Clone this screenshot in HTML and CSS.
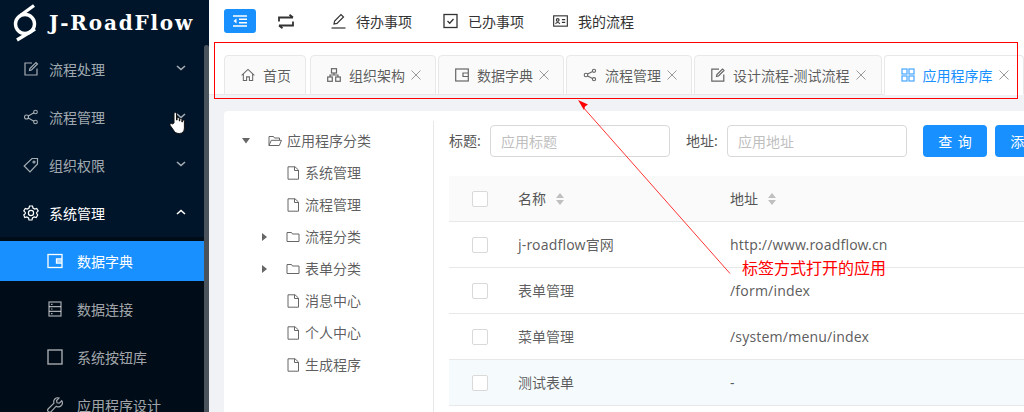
FILE: index.html
```html
<!DOCTYPE html>
<html lang="zh">
<head>
<meta charset="utf-8">
<title>J-RoadFlow</title>
<link rel="stylesheet" href="styles.css">
</head>
<body>
<div class="app">
  <aside class="sidebar">
    <div class="logo">
      <svg class="logo-mark" width="26" height="38" viewBox="0 0 26 38" fill="none" stroke="#fff" stroke-width="3.4"><circle cx="12" cy="20" r="9.5"/><path d="M21 1.500L8 11"/><path d="M4 36L22 25"/></svg>
      <span class="logo-text">J-RoadFlow</span>
    </div>
    <nav class="menu">
      <div class="menu-row">
        <svg class="mi" viewBox="0 0 16 16" fill="none" stroke="currentColor" stroke-width="1.200"><path d="M9 2H2v12h12V7.500"/><path d="M6.500 9.500l.4-2L13 1.500l1.500 1.500L8.500 9z"/></svg>
        <span class="ml">流程处理</span>
        <svg class="chev" viewBox="0 0 10 6" fill="none" stroke="currentColor" stroke-width="1.600"><path d="M1 1l4 3.500L9 1"/></svg>
      </div>
      <div class="menu-row">
        <svg class="mi" viewBox="0 0 16 16" fill="none" stroke="currentColor" stroke-width="1.100"><circle cx="3.500" cy="8" r="2"/><circle cx="12.500" cy="3" r="1.800"/><circle cx="12.500" cy="13" r="1.800"/><path d="M5.300 7l5.600-3.200M5.300 9l5.600 3.200"/></svg>
        <span class="ml">流程管理</span>
        <svg class="chev" viewBox="0 0 10 6" fill="none" stroke="currentColor" stroke-width="1.600"><path d="M1 1l4 3.500L9 1"/></svg>
      </div>
      <div class="menu-row">
        <svg class="mi" viewBox="0 0 16 16" fill="none" stroke="currentColor" stroke-width="1.200"><path d="M9 1.500h5.500V7L7 14.800 1.200 9z"/><circle cx="11" cy="5" r="1"/></svg>
        <span class="ml">组织权限</span>
        <svg class="chev" viewBox="0 0 10 6" fill="none" stroke="currentColor" stroke-width="1.600"><path d="M1 1l4 3.500L9 1"/></svg>
      </div>
      <div class="menu-row open">
        <svg class="mi" viewBox="0 0 16 16" fill="none" stroke="currentColor" stroke-width="1.200"><path d="M6.500 1h3l.5 2 1.700 1 2-.6 1.500 2.600-1.500 1.400v1.200L14.700 10l-1.500 2.600-2-.6-1.700 1-.5 2h-3l-.5-2-1.700-1-2 .6L.8 10l1.500-1.400V7.400L.8 6l1.500-2.600 2 .6L6 3z"/><circle cx="8" cy="8" r="2.600"/></svg>
        <span class="ml">系统管理</span>
        <svg class="chev" viewBox="0 0 10 6" fill="none" stroke="currentColor" stroke-width="1.600"><path d="M1 5l4-3.500L9 5"/></svg>
      </div>
      <div class="submenu">
        <div class="sub-row active">
          <svg class="mi" viewBox="0 0 16 16" fill="none" stroke="currentColor" stroke-width="1.300"><rect x="1" y="1.500" width="14" height="13"/><path d="M15 6H9.500v4H15"/><path d="M9.500 8H15"/></svg>
          <span>数据字典</span>
        </div>
        <div class="sub-row">
          <svg class="mi" viewBox="0 0 16 16" fill="none" stroke="currentColor" stroke-width="1.200"><rect x="2" y="1" width="12" height="14"/><path d="M2 5.700h12M2 10.300h12"/><path d="M4 3.400h1.500M4 8h1.500M4 12.600h1.500"/></svg>
          <span>数据连接</span>
        </div>
        <div class="sub-row">
          <svg class="mi" viewBox="0 0 16 16" fill="none" stroke="currentColor" stroke-width="1.400"><rect x="1" y="1" width="14" height="14"/></svg>
          <span>系统按钮库</span>
        </div>
        <div class="sub-row">
          <svg class="mi" viewBox="0 0 16 16" fill="none" stroke="currentColor" stroke-width="1.200"><path d="M14.800 3.800l-2.500 2.400-2.300-.4-.4-2.300 2.400-2.500a4 4 0 0 0-5 5.200L1.300 11.800a1.800 1.800 0 0 0 2.800 2.800l5.100-5.400a4 4 0 0 0 5.600-5.400z"/></svg>
          <span>应用程序设计</span>
        </div>
      </div>
    </nav>
    <div class="scroll-thumb"></div>
  </aside>

  <main class="main">
    <header class="topbar">
      <button class="toggle" type="button">
        <svg width="14" height="12" viewBox="0 0 14 12" fill="none" stroke="#fff" stroke-width="1.400"><path d="M0 1h14M6 4.300h8M6 7.700h8M0 11h14"/><path d="M3.500 3.500v5L0.500 6z" fill="#fff" stroke="none"/></svg>
      </button>
      <svg class="swap" width="16" height="15" viewBox="0 0 16 15" fill="none" stroke="#333" stroke-width="1.800"><path d="M1 7.500V3.500h14M11.500 .8l3.500 2.700M15 7.500v4H1M4.500 14.200L1 11.500"/></svg>
      <div class="top-items">
        <a class="top-item">
          <svg width="15" height="16" viewBox="0 0 15 16" fill="none" stroke="#333" stroke-width="1.200"><path d="M3 11l.6-3L10 1.500l2.500 2.500L6 10.400z"/><path d="M0.500 15h14"/></svg>
          <span>待办事项</span>
        </a>
        <a class="top-item">
          <svg width="15" height="16" viewBox="0 0 15 16" fill="none" stroke="#333" stroke-width="1.300"><rect x="1" y="1.500" width="13" height="13"/><path d="M4.500 8l2.200 2.200 3.800-4.200"/></svg>
          <span>已办事项</span>
        </a>
        <a class="top-item last">
          <svg width="15" height="14" viewBox="0 0 16 14" fill="none" stroke="#333" stroke-width="1.200"><rect x="0.700" y="1.500" width="14.600" height="11"/><circle cx="5" cy="5.800" r="1.400"/><path d="M2.800 10c.3-1.800 4-1.800 4.400 0M9.500 5.500h3.500M9.500 8.500h3.500"/></svg>
          <span>我的流程</span>
        </a>
      </div>
    </header>

    <div class="tabbar">
      <div class="tab first">
        <svg class="ti" viewBox="0 0 15 14" fill="none" stroke="#666" stroke-width="1.100"><path d="M0.700 7.500L7.500 1l6.800 6.500"/><path d="M2.500 6v7h3.500V9h3v4h3.500V6"/></svg>
        <span class="tl">首页</span>
      </div>
      <div class="tab">
        <svg class="ti" viewBox="0 0 14 14" fill="none" stroke="#666" stroke-width="1.200"><rect x="4.500" y="0.700" width="5" height="4.300"/><rect x="0.700" y="9" width="4.600" height="4.300"/><rect x="8.700" y="9" width="4.600" height="4.300"/><path d="M7 5v2H3v2M7 7h4v2"/></svg>
        <span class="tl">组织架构</span>
        <svg class="tx" viewBox="0 0 10 10" stroke="#999" stroke-width="1"><path d="M.5.500l9 9M9.500.500l-9 9"/></svg>
      </div>
      <div class="tab">
        <svg class="ti" viewBox="0 0 14 14" fill="none" stroke="#666" stroke-width="1.200"><rect x="0.700" y="1" width="12.600" height="12"/><path d="M13 5H8v3.500h5"/></svg>
        <span class="tl">数据字典</span>
        <svg class="tx" viewBox="0 0 10 10" stroke="#999" stroke-width="1"><path d="M.5.500l9 9M9.500.500l-9 9"/></svg>
      </div>
      <div class="tab">
        <svg class="ti" viewBox="0 0 14 14" fill="none" stroke="#666" stroke-width="1.100"><circle cx="3" cy="7" r="1.800"/><circle cx="11" cy="2.800" r="1.600"/><circle cx="11" cy="11.200" r="1.600"/><path d="M4.600 6.100l5-2.600M4.600 7.900l5 2.600"/></svg>
        <span class="tl">流程管理</span>
        <svg class="tx" viewBox="0 0 10 10" stroke="#999" stroke-width="1"><path d="M.5.500l9 9M9.500.500l-9 9"/></svg>
      </div>
      <div class="tab wide">
        <svg class="ti" viewBox="0 0 14 14" fill="none" stroke="#666" stroke-width="1.200"><path d="M8 1.200H.8v12h12V6.500"/><path d="M5.500 8.500l.4-2L11.500 1l1.500 1.500L7.500 8z"/></svg>
        <span class="tl">设计流程-测试流程</span>
        <svg class="tx" viewBox="0 0 10 10" stroke="#999" stroke-width="1"><path d="M.5.500l9 9M9.500.500l-9 9"/></svg>
      </div>
      <div class="tab active">
        <svg class="ti" viewBox="0 0 14 14" fill="none" stroke="#1890ff" stroke-width="1.200" opacity=".8"><rect x="1" y="1" width="5" height="5"/><rect x="8" y="1" width="5" height="5"/><rect x="1" y="8" width="5" height="5"/><rect x="8" y="8" width="5" height="5"/></svg>
        <span class="tl">应用程序库</span>
        <svg class="tx" viewBox="0 0 10 10" stroke="#999" stroke-width="1"><path d="M.5.500l9 9M9.500.500l-9 9"/></svg>
      </div>
    </div>

    <section class="content">
      <div class="card">
        <div class="tree">
          <div class="node">
            <svg class="caret" viewBox="0 0 18 8"><path d="M5 1h8L9 6.500z" fill="#666"/></svg>
            <svg class="ni" viewBox="0 0 14 14" fill="none" stroke="#666" stroke-width="1"><path d="M1 11.500V2.500h4.500l1 1.500h5v2M1 11.500h10.300L13.500 6.300H3.300z"/></svg>
            <span class="nl">应用程序分类</span>
          </div>
          <div class="node child">
            <span class="caret"></span>
            <svg class="ni" viewBox="0 0 14 14" fill="none" stroke="#666" stroke-width="1"><path d="M2 .8h7L12.500 4v9.200H2z"/><path d="M8.500 .8v3.700h4"/></svg>
            <span class="nl">系统管理</span>
          </div>
          <div class="node child">
            <span class="caret"></span>
            <svg class="ni" viewBox="0 0 14 14" fill="none" stroke="#666" stroke-width="1"><path d="M2 .8h7L12.500 4v9.200H2z"/><path d="M8.500 .8v3.700h4"/></svg>
            <span class="nl">流程管理</span>
          </div>
          <div class="node child">
            <svg class="caret" viewBox="0 0 18 8"><path d="M7 0v8l5-4z" fill="#666"/></svg>
            <svg class="ni" viewBox="0 0 14 14" fill="none" stroke="#666" stroke-width="1"><path d="M1 2.500h4.500l1 1.500h6.500v7.500H1z"/></svg>
            <span class="nl">流程分类</span>
          </div>
          <div class="node child">
            <svg class="caret" viewBox="0 0 18 8"><path d="M7 0v8l5-4z" fill="#666"/></svg>
            <svg class="ni" viewBox="0 0 14 14" fill="none" stroke="#666" stroke-width="1"><path d="M1 2.500h4.500l1 1.500h6.500v7.500H1z"/></svg>
            <span class="nl">表单分类</span>
          </div>
          <div class="node child">
            <span class="caret"></span>
            <svg class="ni" viewBox="0 0 14 14" fill="none" stroke="#666" stroke-width="1"><path d="M2 .8h7L12.500 4v9.200H2z"/><path d="M8.500 .8v3.700h4"/></svg>
            <span class="nl">消息中心</span>
          </div>
          <div class="node child">
            <span class="caret"></span>
            <svg class="ni" viewBox="0 0 14 14" fill="none" stroke="#666" stroke-width="1"><path d="M2 .8h7L12.500 4v9.200H2z"/><path d="M8.500 .8v3.700h4"/></svg>
            <span class="nl">个人中心</span>
          </div>
          <div class="node child">
            <span class="caret"></span>
            <svg class="ni" viewBox="0 0 14 14" fill="none" stroke="#666" stroke-width="1"><path d="M2 .8h7L12.500 4v9.200H2z"/><path d="M8.500 .8v3.700h4"/></svg>
            <span class="nl">生成程序</span>
          </div>
        </div>

        <div class="panel">
          <form class="query">
            <label class="q-label">标题:</label>
            <input class="q-input" placeholder="应用标题">
            <label class="q-label q-second">地址:</label>
            <input class="q-input" placeholder="应用地址">
            <button class="btn q-first" type="button">查 询</button>
            <button class="btn" type="button">添 加</button>
          </form>
          <table class="grid">
            <colgroup><col class="c-check"><col class="c-name"><col></colgroup>
            <thead>
              <tr>
                <th class="cell-check"><span class="check"></span></th>
                <th>名称<span class="sorter"><i class="up"></i><i class="down"></i></span></th>
                <th>地址<span class="sorter"><i class="up"></i><i class="down"></i></span></th>
              </tr>
            </thead>
            <tbody>
              <tr><td class="cell-check"><span class="check"></span></td><td class="latin">j-roadflow官网</td><td class="url">http://www.roadflow.cn</td></tr>
              <tr><td class="cell-check"><span class="check"></span></td><td>表单管理</td><td class="url">/form/index</td></tr>
              <tr><td class="cell-check"><span class="check"></span></td><td>菜单管理</td><td class="url">/system/menu/index</td></tr>
              <tr class="hover"><td class="cell-check"><span class="check"></span></td><td>测试表单</td><td class="url">-</td></tr>
            </tbody>
          </table>
        </div>
      </div>
    </section>
  </main>
</div>

<svg class="annot" width="1024" height="412" viewBox="0 0 1024 412" fill="none">
  <rect x="214.500" y="42.500" width="803" height="56" stroke="#f00"/>
  <path d="M730 273.500L582 106" stroke="#f00" stroke-width=".8"/>
  <path d="M578 100l10 4.500-3 2 -1 3.500z" fill="#f00"/>
</svg>
<span class="annot-text">标签方式打开的应用</span>
<svg class="hand" width="18" height="24" viewBox="0 0 18 24">
  <path d="M5 12V3c0-2 2.500-2 2.500 0v6h.6V7.500c0-1.400 2.200-1.400 2.200 0V10h.5V8.500c0-1.300 2.100-1.300 2.100 0V11h.5V10c0-1.200 2-1.200 2 0v7c0 3-1.500 5.500-5 5.500-3 0-4.500-.8-6-3.500L1.200 14.500c-.9-1.500.8-2.700 2-1.500z" fill="#fff" stroke="#111" stroke-width="1"/>
</svg>
</body>
</html>
```
FILE: styles.css
```css
* { box-sizing: border-box; }
html, body { margin: 0; height: 100%; overflow: hidden; }
body {
  font-family: "Noto Sans", "Noto Sans CJK SC", sans-serif;
  font-size: 14px;
  color: rgba(0, 0, 0, .65);
  position: relative;
  background: #f0f2f5;
}
.app { display: flex; width: 1024px; height: 412px; overflow: hidden; }

/* sidebar */
.sidebar {
  position: relative;
  flex: 0 0 209px;
  background: #001529;
  color: rgba(255, 255, 255, .65);
  overflow: hidden;
}
.logo { display: flex; align-items: center; height: 46px; padding-left: 13px; color: #fff; }
.logo-mark { flex: none; margin-top: -1px; }
.logo-text {
  margin-left: 10px;
  font-family: "DejaVu Serif", serif;
  font-weight: 700;
  font-size: 20px;
  letter-spacing: 1.800px;
  line-height: 1;
  white-space: nowrap;
}
.menu { display: flex; flex-direction: column; width: 204px; padding-top: 3px; }
.menu-row {
  display: flex;
  align-items: center;
  height: 40px;
  margin-bottom: 8px;
  padding-left: 23px;
}
.menu-row.open { color: #fff; }
.mi { flex: none; width: 16px; height: 16px; }
.ml { margin-left: 10px; flex: 1; }
.chev { flex: none; width: 10px; height: 6px; margin-right: 18px; margin-top: -2px; }
.submenu { margin-top: -4px; padding-top: 4px; background: #000c17; }
.sub-row {
  display: flex;
  align-items: center;
  gap: 14px;
  height: 40px;
  margin-bottom: 8px;
  padding-left: 47px;
}
.sub-row.active { background: #1890ff; color: #fff; }
.scroll-thumb {
  position: absolute;
  right: 0;
  top: 45px;
  bottom: 0;
  width: 5px;
  background: #4a535c;
  border-radius: 3px 3px 0 0;
}

/* main */
.main { flex: 1; min-width: 0; display: flex; flex-direction: column; overflow: hidden; }
.topbar { display: flex; align-items: center; height: 42px; padding-left: 15px; background: #fff; color: #333; }
.toggle {
  display: flex;
  align-items: center;
  justify-content: center;
  width: 32px;
  height: 24px;
  padding: 0;
  border: 0;
  border-radius: 3px;
  background: #1890ff;
}
.swap { margin-left: 22px; }
.top-items { display: flex; margin-left: 37px; gap: 31px; }
.top-item { display: flex; align-items: center; gap: 10px; }
.top-item.last { margin-left: -2px; }

.tabbar {
  display: flex;
  gap: 2px;
  height: 53px;
  padding: 13px 0 0 15px;
  background: #fff;
  border-bottom: 1px solid #e8e8e8;
}
.tab {
  flex: none;
  display: flex;
  align-items: center;
  height: 40px;
  padding: 0 14px 0 16px;
  background: #fafafa;
  border: 1px solid #e8e8e8;
  border-radius: 4px 4px 0 0;
}
.tab.first { margin-right: 2px; }
.tab.wide { padding-right: 15px; }
.tab.active { background: #fff; border-bottom-color: #fff; color: #1890ff; }
.ti { flex: none; width: 14px; height: 14px; }
.tl { margin-left: 8px; white-space: nowrap; }
.tx { flex: none; width: 10px; height: 10px; margin-left: 6px; }

/* content */
.content { flex: 1; min-height: 0; padding: 16px 0 0 15px; }
.card {
  display: flex;
  height: 100%;
  padding-top: 10px;
  background: #fff;
  border-radius: 4px 0 0 0;
}
.tree { flex: 0 0 210px; padding: 4px 0 0 13px; border-right: 1px solid #e8e8e8; }
.node { display: flex; align-items: center; height: 32px; }
.node.child { padding-left: 18px; }
.caret { flex: none; display: block; width: 18px; height: 8px; }
.ni { flex: none; width: 14px; height: 14px; margin: 0 5px 0 13px; }
.nl { padding-bottom: 2px; }

.panel { flex: 1; min-width: 0; padding: 4px 0 0 15px; }
.query { display: flex; align-items: center; height: 32px; margin-bottom: 19px; }
.q-label { flex: none; width: 41px; padding-bottom: 2px; color: #555; white-space: nowrap; }
.q-second { margin-left: 16px; }
.q-input {
  flex: none;
  width: 180px;
  height: 32px;
  padding: 0 10px;
  border: 1px solid #d9d9d9;
  border-radius: 4px;
  font: inherit;
  background: #fff;
}
.q-input::placeholder { color: #bfbfbf; }
.btn {
  flex: none;
  width: 64px;
  height: 32px;
  margin-left: 8px;
  padding: 0;
  border: 0;
  border-radius: 4px;
  background: #1890ff;
  color: #fff;
  font: inherit;
  word-spacing: 2px;
}
.btn.q-first { margin-left: 16px; }

.grid { width: 100%; table-layout: fixed; border-collapse: separate; border-spacing: 0; }
.c-check { width: 69px; }
.c-name { width: 212px; }
.grid th {
  height: 46px;
  padding: 0 0 2px;
  text-align: left;
  font-weight: 400;
  color: #555;
  background: #fafafa;
  border-bottom: 1px solid #e8e8e8;
}
.grid td { height: 46px; padding: 0 0 2px; border-bottom: 1px solid #e8e8e8; }
.grid .cell-check { padding-bottom: 0; }
.grid .latin { letter-spacing: .15px; }
.grid .url { padding-bottom: 0; letter-spacing: .15px; }
.grid tr.hover td { background: #f5fafd; }
.check {
  display: block;
  width: 16px;
  height: 16px;
  margin-left: 23px;
  background: #fff;
  border: 1px solid #d9d9d9;
  border-radius: 2px;
}
.sorter {
  display: inline-flex;
  flex-direction: column;
  gap: 2px;
  margin-left: 10px;
  vertical-align: middle;
  margin-top: -2px;
}
.sorter i { display: block; width: 0; height: 0; border-left: 4px solid transparent; border-right: 4px solid transparent; }
.sorter .up { border-bottom: 5px solid #bfbfbf; }
.sorter .down { border-top: 5px solid #bfbfbf; }

/* annotations drawn over the screenshot */
.annot { position: absolute; left: 0; top: 0; pointer-events: none; }
.annot-text { position: absolute; left: 742px; top: 257px; font-size: 16px; line-height: 22px; color: #f00; white-space: nowrap; }
.hand { position: absolute; left: 169px; top: 111px; }
```
